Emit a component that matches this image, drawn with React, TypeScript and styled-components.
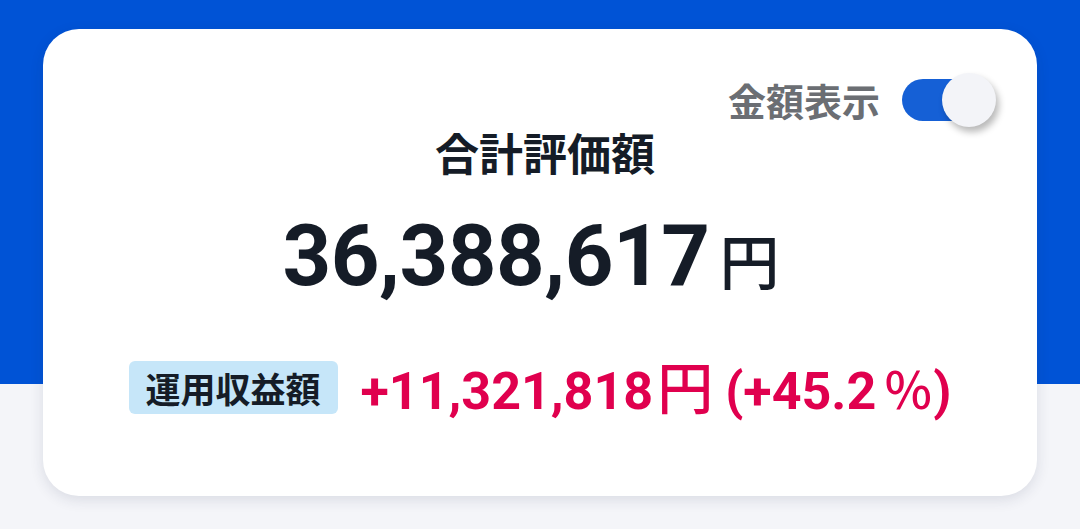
import styled, { createGlobalStyle } from "styled-components";

const GlobalStyle = createGlobalStyle`
  html, body {
    margin: 0;
    padding: 0;
    background: #f4f5f9;
    font-family: Roboto, "Noto Sans CJK JP", sans-serif;
  }
`

const Page = styled.div`
  position: relative;
  width: 1080px;
  height: 529px;
  overflow: hidden;
  background: linear-gradient(to bottom, #0053d6 0, #0053d6 384px, #f4f5f9 384px);
  padding-top: 29px;
  box-sizing: border-box;
`

const Card = styled.div`
  margin: 0 43px;
  height: 467px;
  box-sizing: border-box;
  background: #ffffff;
  border-radius: 36px;
  box-shadow: 0 4px 14px rgba(30, 40, 70, 0.12);
  display: flex;
  flex-direction: column;
  align-items: center;
  padding: 44px 41px 0 41px;
`

const ToggleRow = styled.div`
  align-self: flex-end;
  display: flex;
  align-items: center;
  gap: 22px;
  height: 54px;
`

const ToggleLabel = styled.span`
  font-family: "Noto Sans CJK JP", sans-serif;
  font-weight: 700;
  font-size: 38px;
  color: #6b6e73;
  line-height: 1;
`

const Switch = styled.div<{ on: boolean }>`
  position: relative;
  width: 94px;
  height: 54px;
  display: flex;
  align-items: center;
`

const Track = styled.div<{ on: boolean }>`
  width: 86px;
  height: 42px;
  border-radius: 21px;
  background: ${p => p.on ? '#1560d6' : '#c5c8ce'};
`

const Knob = styled.div<{ on: boolean }>`
  position: absolute;
  top: 0;
  ${p => p.on ? 'right: 0;' : 'left: 0;'}
  width: 54px;
  height: 54px;
  border-radius: 50%;
  background: #f3f4f8;
  box-shadow: 3px 5px 7px rgba(0, 0, 0, 0.28);
`

const Title = styled.h2`
  margin: 3px 0 0 10px;
  font-family: "Noto Sans CJK JP", sans-serif;
  font-weight: 700;
  font-size: 44px;
  line-height: 1;
  color: #151c27;
`

const Total = styled.div`
  margin: 40px 18px 0 0;
  display: flex;
  align-items: baseline;
  color: #151c27;
  line-height: 1;
`

const TotalNumber = styled.span`
  font-family: Roboto, sans-serif;
  font-weight: 700;
  font-size: 85px;
  letter-spacing: -0.5px;
`

const Yen = styled.span<{ size: number; gap: number }>`
  font-family: "Noto Sans CJK JP", sans-serif;
  font-weight: 500;
  font-size: ${p => p.size}px;
  margin-left: ${p => p.gap}px;
`

const ProfitRow = styled.div`
  margin-top: 58px;
  display: flex;
  align-items: center;
  gap: 23px;
`

const Badge = styled.span`
  display: inline-flex;
  align-items: center;
  height: 53px;
  padding: 0 17px;
  border-radius: 6px;
  background: #c6e6f9;
  font-family: "Noto Sans CJK JP", sans-serif;
  font-weight: 700;
  font-size: 35px;
  color: #151c27;
`

const Profit = styled.div`
  display: flex;
  align-items: baseline;
  color: #e0004e;
  line-height: 1;
`

const ProfitNumber = styled.span`
  font-family: Roboto, sans-serif;
  font-weight: 700;
  font-size: 52px;
`

const Percent = styled.span`
  font-family: Roboto, sans-serif;
  font-weight: 700;
  font-size: 52px;
  margin-left: 12px;
`

const PercentSign = styled.span`
  font-family: "Noto Sans CJK JP", sans-serif;
  font-weight: 500;
  font-size: 50px;
  margin: 0 0 0 7px;
`

export default function App() {
  const showAmount = true
  return (
    <>
      <GlobalStyle />
      <Page>
        <Card>
          <ToggleRow>
            <ToggleLabel>金額表示</ToggleLabel>
            <Switch on={showAmount}>
              <Track on={showAmount} />
              <Knob on={showAmount} />
            </Switch>
          </ToggleRow>
          <Title>合計評価額</Title>
          <Total>
            <TotalNumber>36,388,617</TotalNumber>
            <Yen size={60} gap={10}>円</Yen>
          </Total>
          <ProfitRow>
            <Badge>運用収益額</Badge>
            <Profit>
              <ProfitNumber>+11,321,818</ProfitNumber>
              <Yen size={56} gap={4}>円</Yen>
              <Percent>(+45.2<PercentSign>％</PercentSign>)</Percent>
            </Profit>
          </ProfitRow>
        </Card>
      </Page>
    </>
  )
}
